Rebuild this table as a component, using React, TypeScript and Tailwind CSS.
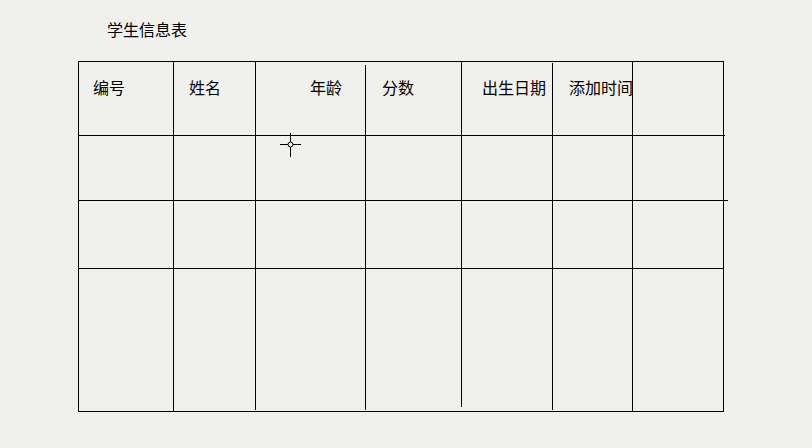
import React from "react";

const font = { fontFamily: '"Noto Sans CJK SC", "Noto Sans", sans-serif' };

export default function App() {
  return (
    <div
      className="relative w-[812px] h-[448px] bg-[#f0f1ec] text-black overflow-hidden"
      style={font}
    >
      <div className="pl-[107px] pt-[21px] text-[16px] leading-[16px]">学生信息表</div>

      <div className="ml-[78px] mt-[24px] w-[646px] h-[351px] border border-black relative">
        {/* horizontal lines (rows) */}
        <div className="flex flex-col h-full">
          <div className="h-[74px] border-b border-black mr-[-2px]" />
          <div className="h-[65px] border-b border-black mr-[-5px]" />
          <div className="h-[68px] border-b border-black" />
          <div className="flex-1" />
        </div>

        {/* vertical lines and header text */}
        <div className="absolute inset-0 flex text-[16px] leading-[16px] whitespace-nowrap">
          <div className="w-[94px] pt-[17px] pl-[14px]">编号</div>
          <div className="w-px bg-black" />
          <div className="w-[81px] pt-[17px] pl-[15px]">姓名</div>
          <div className="w-px bg-black mb-[1px]" />
          <div className="w-[109px] pt-[17px] pl-[54px]">年龄</div>
          <div className="w-px bg-black mt-[3px] mb-[1px]" />
          <div className="w-[95px] pt-[17px] pl-[16px]">分数</div>
          <div className="w-px bg-black mb-[4px]" />
          <div className="w-[90px] pt-[17px] pl-[20px]">出生日期</div>
          <div className="w-px bg-black mt-[1px] mb-[1px]" />
          <div className="w-[79px] pt-[17px] pl-[16px]">添加时间</div>
          <div className="w-px bg-black" />
          <div className="w-[90px]" />
        </div>
      </div>

      {/* mouse cursor crosshair */}
      <svg
        className="absolute left-[279px] top-[133px]"
        width="23"
        height="24"
        viewBox="0 0 23 24"
      >
        <line x1="1" y1="11.5" x2="22" y2="11.5" stroke="black" strokeWidth="1" />
        <line x1="11.5" y1="0" x2="11.5" y2="24" stroke="black" strokeWidth="1" />
        <circle cx="11.5" cy="11.5" r="2.5" fill="#f0f1ec" stroke="black" strokeWidth="1" />
      </svg>
    </div>
  );
}
